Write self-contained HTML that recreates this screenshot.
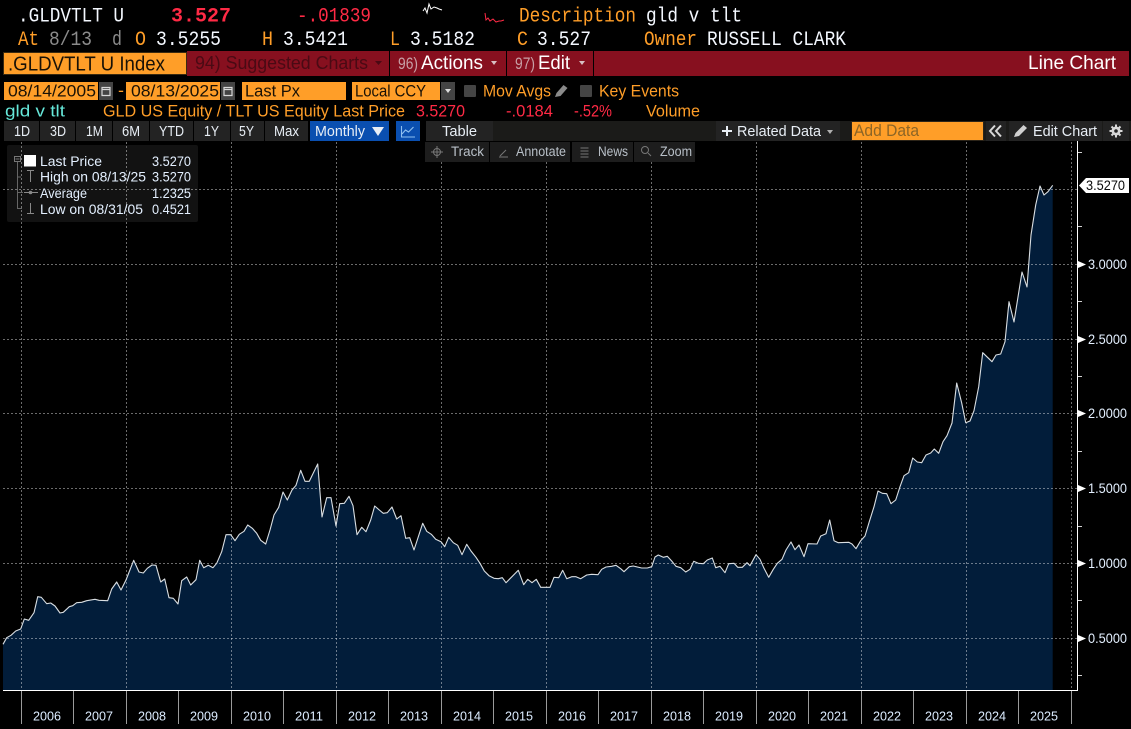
<!DOCTYPE html>
<html><head><meta charset="utf-8"><title>GLDVTLT Line Chart</title>
<style>
html,body{margin:0;padding:0;background:#000;width:1131px;height:729px;overflow:hidden}
svg{display:block}
text{font-family:"Liberation Sans",sans-serif;white-space:pre}
.m{font-family:"Liberation Mono",monospace;font-size:20px}
.o{fill:#ff9e28}.w{fill:#f4f8ff}.r{fill:#ff2a45}.g{fill:#8b8b8b}.k{fill:#1a1206}
.b{font-size:16.5px}.c{font-size:15px;fill:#e8eef5}.s{font-size:13.5px;fill:#b9c0c8}
.l{font-size:13.5px;fill:#e4f0ff}.y{font-size:13px;fill:#dcecff}.a{font-size:14px;fill:#e4f0ff}
</style></head><body>
<svg width="1131" height="729" viewBox="0 0 1131 729" xmlns="http://www.w3.org/2000/svg">
<rect width="1131" height="729" fill="#000"/>

<!-- legend background -->
<rect x="7" y="145" width="191" height="77" rx="2" fill="#121212"/>

<!-- area -->
<path id="area" fill="#021d3a" d="M3,690L3,644.3 6.7,637.7 11,635.3 15.7,631 20.7,629 24.3,619 28.7,620.3 34,612.7 37.7,596.7 41.3,597.3 46.7,603.7 50.7,603 55,606 60,613 63.3,612.3 69.3,606.7 72.7,605.7 76.7,602.7 81.7,602.3 86.7,600.7 95,599.3 99,600.3 107.7,600.7 111.7,589 116.7,582 121,590 126,580 133.7,560.3 139,572 143.3,573 147.3,568.3 152,565 156,565.3 160.7,582 164.7,579 169,597.7 173.3,598.3 178,604 181.7,580.7 186.7,577 190.7,585 196,579.7 199.7,560.3 203.7,567.7 208.3,565.3 213,567.7 216.7,563.3 221.7,551.7 226,534.7 230.7,534.7 235,540.7 239.3,534.3 244,531.3 247.7,525 252.3,528.3 256.7,533.3 260.7,540.3 265.7,544 270,530 274,515 278.7,507.3 283,492 287.3,500 292,490 296,485.3 300.7,470.3 305,481.3 309.3,481.3 317.7,464 322,517 326.7,497.7 331,497.7 336,526 339.7,503.7 344.3,503.3 349,496.3 353,505.7 357,534.7 361.7,527.3 366,531.7 370.7,520 374.7,506 379.3,510 383.3,513.3 387.3,512.7 392,507 396.7,519 401,515.7 405.7,538.3 409.7,537.7 414,550 422.7,523.3 426.7,531.3 431.3,534.3 435.7,539.3 441,541.7 444.7,546.7 448.7,537.3 453.3,542.7 457.7,545.3 462,554.7 466.7,544.3 471,551 476,557.3 480,563.3 484.3,571 489,575.7 494,578.3 498.3,578.7 502.3,577.7 506,582.7 518.3,570.3 523.7,584.7 527.7,579.3 532,582.7 536.3,579.3 540.7,587.3 550,587.3 554,577.3 558.7,577.7 562.7,570.3 566.7,578.7 571.7,576.7 576,576.7 580.7,578.7 586.7,575 591.7,574.3 598,574.7 601.7,569.3 606,567 611.7,566.3 616,565.3 620.7,568.7 624,571.7 629.3,566.7 633.3,566 641.7,568 647.3,568 651.7,566.7 655,557 658.3,555 663.3,557.3 667.3,556.3 671.7,561 676,566.3 680.7,567.7 685.7,572 690,569.3 693.7,561.3 698.3,563.3 703.3,563.7 707.3,560 712.3,558 715.7,567.7 720,566.3 725,572.7 728.7,563.7 734,563.3 737.7,567.3 742.3,567.3 747,562.7 750,565.7 756,554.7 760,559.3 764,568.3 768.7,577.3 773.3,569.3 777.3,563.3 782,559.3 786,550 791,542 795,549.7 799,545 804,556.7 808,543.7 817,544 820.7,536 826,533.7 829.7,520 834,540.7 838.3,542.7 848.7,542.3 852,544 856,548.7 860.7,540.7 865,536 869.3,521.7 874,506.7 878,491 882.3,493.3 886.7,493.7 891,503.7 895.7,500 900,486.7 904,475.7 908.7,472.7 912.7,458 917.3,462 921.7,462.7 926,455 930.7,453 934.3,449 938.7,453.3 943,441.7 947,435.7 952,423 956.7,383 961.7,403 965.7,422.7 970,421 974,410.7 978.7,386.7 982.7,352.7 992,361.7 996,355 1000.7,354 1005,341.7 1009,301.7 1014,322 1022,272 1027,287 1031,235 1035.7,205 1040,186 1044,195 1048,191.7 1052.7,185.3L1052.7,690Z"/>

<!-- grid -->
<g stroke="#fff" stroke-opacity=".42" stroke-width="1" stroke-dasharray="2 2" fill="none">
<path d="M3,189.5H1077M3,264.5H1077M3,339.5H1077M3,413.5H1077M3,488.5H1077M3,563.5H1077M3,638.5H1077"/>
<path d="M21.5,142V690M126.5,142V690M231.5,142V690M336.5,142V690M441.5,142V690M546.5,142V690M651.5,142V690M756.5,142V690M861.5,142V690M966.5,142V690M1071.5,142V690"/>
</g>

<!-- line -->
<polyline fill="none" stroke="#d9dee2" stroke-width="1.1" stroke-linejoin="round" points="3,644.3 6.7,637.7 11,635.3 15.7,631 20.7,629 24.3,619 28.7,620.3 34,612.7 37.7,596.7 41.3,597.3 46.7,603.7 50.7,603 55,606 60,613 63.3,612.3 69.3,606.7 72.7,605.7 76.7,602.7 81.7,602.3 86.7,600.7 95,599.3 99,600.3 107.7,600.7 111.7,589 116.7,582 121,590 126,580 133.7,560.3 139,572 143.3,573 147.3,568.3 152,565 156,565.3 160.7,582 164.7,579 169,597.7 173.3,598.3 178,604 181.7,580.7 186.7,577 190.7,585 196,579.7 199.7,560.3 203.7,567.7 208.3,565.3 213,567.7 216.7,563.3 221.7,551.7 226,534.7 230.7,534.7 235,540.7 239.3,534.3 244,531.3 247.7,525 252.3,528.3 256.7,533.3 260.7,540.3 265.7,544 270,530 274,515 278.7,507.3 283,492 287.3,500 292,490 296,485.3 300.7,470.3 305,481.3 309.3,481.3 317.7,464 322,517 326.7,497.7 331,497.7 336,526 339.7,503.7 344.3,503.3 349,496.3 353,505.7 357,534.7 361.7,527.3 366,531.7 370.7,520 374.7,506 379.3,510 383.3,513.3 387.3,512.7 392,507 396.7,519 401,515.7 405.7,538.3 409.7,537.7 414,550 422.7,523.3 426.7,531.3 431.3,534.3 435.7,539.3 441,541.7 444.7,546.7 448.7,537.3 453.3,542.7 457.7,545.3 462,554.7 466.7,544.3 471,551 476,557.3 480,563.3 484.3,571 489,575.7 494,578.3 498.3,578.7 502.3,577.7 506,582.7 518.3,570.3 523.7,584.7 527.7,579.3 532,582.7 536.3,579.3 540.7,587.3 550,587.3 554,577.3 558.7,577.7 562.7,570.3 566.7,578.7 571.7,576.7 576,576.7 580.7,578.7 586.7,575 591.7,574.3 598,574.7 601.7,569.3 606,567 611.7,566.3 616,565.3 620.7,568.7 624,571.7 629.3,566.7 633.3,566 641.7,568 647.3,568 651.7,566.7 655,557 658.3,555 663.3,557.3 667.3,556.3 671.7,561 676,566.3 680.7,567.7 685.7,572 690,569.3 693.7,561.3 698.3,563.3 703.3,563.7 707.3,560 712.3,558 715.7,567.7 720,566.3 725,572.7 728.7,563.7 734,563.3 737.7,567.3 742.3,567.3 747,562.7 750,565.7 756,554.7 760,559.3 764,568.3 768.7,577.3 773.3,569.3 777.3,563.3 782,559.3 786,550 791,542 795,549.7 799,545 804,556.7 808,543.7 817,544 820.7,536 826,533.7 829.7,520 834,540.7 838.3,542.7 848.7,542.3 852,544 856,548.7 860.7,540.7 865,536 869.3,521.7 874,506.7 878,491 882.3,493.3 886.7,493.7 891,503.7 895.7,500 900,486.7 904,475.7 908.7,472.7 912.7,458 917.3,462 921.7,462.7 926,455 930.7,453 934.3,449 938.7,453.3 943,441.7 947,435.7 952,423 956.7,383 961.7,403 965.7,422.7 970,421 974,410.7 978.7,386.7 982.7,352.7 992,361.7 996,355 1000.7,354 1005,341.7 1009,301.7 1014,322 1022,272 1027,287 1031,235 1035.7,205 1040,186 1044,195 1048,191.7 1052.7,185.3"/>

<!-- axes -->
<path d="M3,690.5H1078M1077.5,141V691" stroke="#fff" stroke-width="1" fill="none"/>
<path d="M1078,152.5h4M1078,226.5h4M1078,301.5h4M1078,376.5h4M1078,451.5h4M1078,526.5h4M1078,600.5h4M1078,675.5h4" stroke="#d0d0d0" stroke-width="1"/>
<path d="M21.5,691V724M73.5,691V724M126.5,691V724M178.5,691V724M231.5,691V724M283.5,691V724M336.5,691V724M388.5,691V724M441.5,691V724M493.5,691V724M546.5,691V724M598.5,691V724M651.5,691V724M703.5,691V724M756.5,691V724M808.5,691V724M861.5,691V724M913.5,691V724M966.5,691V724M1018.5,691V724M1071.5,691V724" stroke="#9a9a9a" stroke-width="1"/>
<path fill="#fff" d="M1078,261l8,3.5-8,3.5zM1078,336l8,3.5-8,3.5zM1078,410l8,3.5-8,3.5zM1078,485l8,3.5-8,3.5zM1078,560l8,3.5-8,3.5zM1078,635l8,3.5-8,3.5z"/>

<!-- year labels -->
<g class="y">
<text class="y" x="33" y="720.5" textLength="28" lengthAdjust="spacingAndGlyphs">2006</text>
<text class="y" x="85" y="720.5" textLength="28" lengthAdjust="spacingAndGlyphs">2007</text>
<text class="y" x="138" y="720.5" textLength="28" lengthAdjust="spacingAndGlyphs">2008</text>
<text class="y" x="190" y="720.5" textLength="28" lengthAdjust="spacingAndGlyphs">2009</text>
<text class="y" x="243" y="720.5" textLength="28" lengthAdjust="spacingAndGlyphs">2010</text>
<text class="y" x="295" y="720.5" textLength="28" lengthAdjust="spacingAndGlyphs">2011</text>
<text class="y" x="348" y="720.5" textLength="28" lengthAdjust="spacingAndGlyphs">2012</text>
<text class="y" x="400" y="720.5" textLength="28" lengthAdjust="spacingAndGlyphs">2013</text>
<text class="y" x="453" y="720.5" textLength="28" lengthAdjust="spacingAndGlyphs">2014</text>
<text class="y" x="505" y="720.5" textLength="28" lengthAdjust="spacingAndGlyphs">2015</text>
<text class="y" x="558" y="720.5" textLength="28" lengthAdjust="spacingAndGlyphs">2016</text>
<text class="y" x="610" y="720.5" textLength="28" lengthAdjust="spacingAndGlyphs">2017</text>
<text class="y" x="663" y="720.5" textLength="28" lengthAdjust="spacingAndGlyphs">2018</text>
<text class="y" x="715" y="720.5" textLength="28" lengthAdjust="spacingAndGlyphs">2019</text>
<text class="y" x="768" y="720.5" textLength="28" lengthAdjust="spacingAndGlyphs">2020</text>
<text class="y" x="820" y="720.5" textLength="28" lengthAdjust="spacingAndGlyphs">2021</text>
<text class="y" x="873" y="720.5" textLength="28" lengthAdjust="spacingAndGlyphs">2022</text>
<text class="y" x="925" y="720.5" textLength="28" lengthAdjust="spacingAndGlyphs">2023</text>
<text class="y" x="978" y="720.5" textLength="28" lengthAdjust="spacingAndGlyphs">2024</text>
<text class="y" x="1030" y="720.5" textLength="28" lengthAdjust="spacingAndGlyphs">2025</text>
</g>

<!-- axis labels -->
<text class="a" x="1088" y="269" textLength="39" lengthAdjust="spacingAndGlyphs">3.0000</text>
<text class="a" x="1088" y="344" textLength="39" lengthAdjust="spacingAndGlyphs">2.5000</text>
<text class="a" x="1088" y="418" textLength="39" lengthAdjust="spacingAndGlyphs">2.0000</text>
<text class="a" x="1088" y="493" textLength="39" lengthAdjust="spacingAndGlyphs">1.5000</text>
<text class="a" x="1088" y="568" textLength="39" lengthAdjust="spacingAndGlyphs">1.0000</text>
<text class="a" x="1088" y="643" textLength="39" lengthAdjust="spacingAndGlyphs">0.5000</text>
<path fill="#fff" d="M1079,185.5l7,-7.5h43v15h-43z"/>
<text x="1086" y="190" font-size="14" fill="#0a0a0a" textLength="39" lengthAdjust="spacingAndGlyphs">3.5270</text>

<!-- header rows -->
<text class="m w" x="18" y="21.5" textLength="106" lengthAdjust="spacingAndGlyphs">.GLDVTLT U</text>
<text class="m r" x="171" y="21.5" font-weight="bold" textLength="60" lengthAdjust="spacingAndGlyphs">3.527</text>
<text class="m r" x="297" y="21.5" textLength="74" lengthAdjust="spacingAndGlyphs">-.01839</text>
<polyline fill="none" stroke="#fff" stroke-width="1" points="423,11 425,8 427,13 429,4 431,9 434,7 437,8 439,9 442,10"/>
<polyline fill="none" stroke="#ff2a45" stroke-width="1" points="485,13 486,20 488,18 490,21 493,19 496,22 499,21 501,21 504,20"/>
<text class="m o" x="519" y="21.5" textLength="117" lengthAdjust="spacingAndGlyphs">Description</text>
<text class="m w" x="646" y="21.5" textLength="96" lengthAdjust="spacingAndGlyphs">gld v tlt</text>

<text class="m o" x="18" y="45" textLength="21" lengthAdjust="spacingAndGlyphs">At</text>
<text class="m g" x="49" y="45" textLength="43" lengthAdjust="spacingAndGlyphs">8/13</text>
<text class="m g" x="112" y="45" textLength="10" lengthAdjust="spacingAndGlyphs">d</text>
<text class="m o" x="135" y="45" textLength="11" lengthAdjust="spacingAndGlyphs">O</text>
<text class="m w" x="156" y="45" textLength="65" lengthAdjust="spacingAndGlyphs">3.5255</text>
<text class="m o" x="262" y="45" textLength="11" lengthAdjust="spacingAndGlyphs">H</text>
<text class="m w" x="283" y="45" textLength="65" lengthAdjust="spacingAndGlyphs">3.5421</text>
<text class="m o" x="390" y="45" textLength="10" lengthAdjust="spacingAndGlyphs">L</text>
<text class="m w" x="410" y="45" textLength="65" lengthAdjust="spacingAndGlyphs">3.5182</text>
<text class="m o" x="517" y="45" textLength="11" lengthAdjust="spacingAndGlyphs">C</text>
<text class="m w" x="537" y="45" textLength="54" lengthAdjust="spacingAndGlyphs">3.527</text>
<text class="m o" x="644" y="45" textLength="53" lengthAdjust="spacingAndGlyphs">Owner</text>
<text class="m w" x="707" y="45" textLength="139" lengthAdjust="spacingAndGlyphs">RUSSELL CLARK</text>

<!-- red bar -->
<rect x="187" y="51" width="942" height="25" fill="#87101f"/>
<rect x="3" y="52" width="184" height="23" fill="#3a2a10"/>
<rect x="4" y="53" width="182" height="21" fill="#ff9e28"/>
<text x="8" y="70.5" font-size="20" class="k" textLength="157" lengthAdjust="spacingAndGlyphs">.GLDVTLT U Index</text>
<text x="195" y="69" font-size="18.5" fill="#4a0a14" textLength="173" lengthAdjust="spacingAndGlyphs">94) Suggested Charts</text>
<path fill="#4a0a14" d="M375,61h7l-3.5,4z"/>
<path d="M389.5,51V76M506.5,51V76M593.5,51V76" stroke="#000" stroke-width="1"/>
<text x="398" y="69" font-size="17" fill="#c7a0a6" textLength="20" lengthAdjust="spacingAndGlyphs">96)</text>
<text x="421" y="69" font-size="19.5" fill="#fff" textLength="62" lengthAdjust="spacingAndGlyphs">Actions</text>
<path fill="#d8c0c4" d="M491,61h6l-3,4z"/>
<text x="515" y="69" font-size="17" fill="#c7a0a6" textLength="20" lengthAdjust="spacingAndGlyphs">97)</text>
<text x="538" y="69" font-size="19.5" fill="#fff" textLength="32" lengthAdjust="spacingAndGlyphs">Edit</text>
<path fill="#d8c0c4" d="M579,61h6l-3,4z"/>
<text x="1028" y="69" font-size="19.5" fill="#fff" textLength="88" lengthAdjust="spacingAndGlyphs">Line Chart</text>

<!-- date row -->
<rect x="4" y="82" width="94" height="18" fill="#ff9e28"/>
<text class="b k" x="8" y="96.5" textLength="88" lengthAdjust="spacingAndGlyphs">08/14/2005</text>
<rect x="99" y="82" width="14" height="18" fill="#444"/>
<path d="M102,87.5h8v8h-8zM102,89.5h8" fill="none" stroke="#d8d8d8" stroke-width="1.2"/>
<text class="b" fill="#ff9e28" x="118" y="96" textLength="6" lengthAdjust="spacingAndGlyphs">-</text>
<rect x="126" y="82" width="94" height="18" fill="#ff9e28"/>
<text class="b k" x="131" y="96.5" textLength="88" lengthAdjust="spacingAndGlyphs">08/13/2025</text>
<rect x="221" y="82" width="14" height="18" fill="#444"/>
<path d="M224,87.5h8v8h-8zM224,89.5h8" fill="none" stroke="#d8d8d8" stroke-width="1.2"/>
<rect x="242" y="82" width="104" height="18" fill="#ff9e28"/>
<text class="b k" x="245" y="96.5" textLength="55" lengthAdjust="spacingAndGlyphs">Last Px</text>
<rect x="352" y="82" width="88" height="18" fill="#ff9e28"/>
<text class="b k" x="355" y="96.5" textLength="71" lengthAdjust="spacingAndGlyphs">Local CCY</text>
<rect x="441" y="82" width="14" height="18" fill="#444"/>
<path fill="#ddd" d="M445,89h6l-3,4z"/>
<rect x="464" y="85" width="12" height="12" rx="1" fill="#444"/>
<text class="b o" x="483" y="96.5" textLength="68" lengthAdjust="spacingAndGlyphs">Mov Avgs</text>
<path fill="#8a8a8a" d="M555,97l1.5,-4 7,-8 4,3 -7,8z"/>
<rect x="580" y="85" width="12" height="12" rx="1" fill="#444"/>
<text class="b o" x="599" y="96.5" textLength="80" lengthAdjust="spacingAndGlyphs">Key Events</text>

<!-- description row -->
<text class="b" fill="#66e8da" x="5" y="116.5" textLength="60" lengthAdjust="spacingAndGlyphs">gld v tlt</text>
<text class="b o" x="103" y="116.5" textLength="302" lengthAdjust="spacingAndGlyphs">GLD US Equity / TLT US Equity Last Price</text>
<text class="b r" x="416" y="116.5" textLength="49" lengthAdjust="spacingAndGlyphs">3.5270</text>
<text class="b r" x="506" y="116.5" textLength="47" lengthAdjust="spacingAndGlyphs">-.0184</text>
<text class="b r" x="574" y="116.5" textLength="38" lengthAdjust="spacingAndGlyphs">-.52%</text>
<text class="b o" x="646" y="116.5" textLength="54" lengthAdjust="spacingAndGlyphs">Volume</text>

<!-- toolbar -->
<rect x="493" y="121" width="638" height="20" fill="#1b1b19"/>
<g fill="#232323">
<rect x="4" y="121" width="35" height="20"/><rect x="40" y="121" width="35" height="20"/><rect x="76" y="121" width="36" height="20"/><rect x="113" y="121" width="36" height="20"/><rect x="150" y="121" width="43" height="20"/><rect x="194" y="121" width="36" height="20"/><rect x="231" y="121" width="33" height="20"/><rect x="265" y="121" width="43" height="20"/><rect x="426" y="121" width="67" height="20"/><rect x="716" y="121" width="124" height="20"/><rect x="986" y="121" width="20" height="20"/><rect x="1009" y="121" width="93" height="20"/><rect x="1103" y="121" width="26" height="20"/>
</g>
<rect x="310" y="121" width="79" height="20" fill="#0a4fb0"/>
<rect x="396" y="121" width="24" height="20" fill="#0a4fb0"/>
<text class="c" x="14" y="136" textLength="16" lengthAdjust="spacingAndGlyphs">1D</text>
<text class="c" x="50" y="136" textLength="16" lengthAdjust="spacingAndGlyphs">3D</text>
<text class="c" x="86" y="136" textLength="17" lengthAdjust="spacingAndGlyphs">1M</text>
<text class="c" x="122" y="136" textLength="18" lengthAdjust="spacingAndGlyphs">6M</text>
<text class="c" x="159" y="136" textLength="25" lengthAdjust="spacingAndGlyphs">YTD</text>
<text class="c" x="204" y="136" textLength="15" lengthAdjust="spacingAndGlyphs">1Y</text>
<text class="c" x="239" y="136" textLength="15" lengthAdjust="spacingAndGlyphs">5Y</text>
<text class="c" x="274" y="136" textLength="25" lengthAdjust="spacingAndGlyphs">Max</text>
<text class="c" x="315" y="136" textLength="50" lengthAdjust="spacingAndGlyphs">Monthly</text>
<path fill="#e8eef5" d="M372,127h12l-6,9z"/>
<path d="M401.5,126V137H415M402,134l3.5,-4 3,2 5,-5" fill="none" stroke="#8fc0f0" stroke-width="1.1"/>
<text class="c" x="442" y="136" textLength="35" lengthAdjust="spacingAndGlyphs">Table</text>
<path d="M722,131h10M727,126v10" stroke="#e8eef5" stroke-width="2"/>
<text class="c" x="737" y="136" textLength="84" lengthAdjust="spacingAndGlyphs">Related Data</text>
<path fill="#b0b0b0" d="M827,130h6l-3,4z"/>
<rect x="851" y="121" width="133" height="20" fill="#2c2418"/>
<rect x="852" y="122" width="131" height="18" fill="#ff9e28"/>
<text x="854" y="136" font-size="16.5" fill="#8c6526" textLength="65" lengthAdjust="spacingAndGlyphs">Add Data</text>
<path d="M995,125.5l-5,5.5 5,5.5M1001,125.5l-5,5.5 5,5.5" fill="none" stroke="#d8d8d8" stroke-width="2"/>
<path fill="#d0d0d0" d="M1014,137l1.5,-4 8,-8 3.5,3 -8,8z"/>
<text class="c" x="1033" y="136" textLength="64" lengthAdjust="spacingAndGlyphs">Edit Chart</text>
<path d="M1116,124.5v13M1109.5,131h13M1111.5,126.5l9,9M1120.5,126.5l-9,9" stroke="#d8d8d8" stroke-width="2"/>
<circle cx="1116" cy="131" r="4.5" fill="#d8d8d8"/>
<circle cx="1116" cy="131" r="1.8" fill="#232323"/>

<!-- chart tools -->
<g fill="#1d1d1d">
<rect x="425" y="142" width="64" height="20"/><rect x="490" y="142" width="80" height="20"/><rect x="572" y="142" width="61" height="20"/><rect x="634" y="142" width="61" height="20"/>
</g>
<g stroke="#777" fill="none" stroke-width="1">
<circle cx="437" cy="152" r="3.5"/><path d="M437,146v12M431,152h12"/>
<path d="M500,156l6,-6M499,157h9"/>
<path d="M580.5,148h8M580.5,151h8M580.5,154h8M580.5,157h8"/>
<circle cx="645" cy="150" r="3.5"/><path d="M648,153l3,3"/>
</g>
<text class="s" x="451" y="156" textLength="33" lengthAdjust="spacingAndGlyphs">Track</text>
<text class="s" x="516" y="156" textLength="50" lengthAdjust="spacingAndGlyphs">Annotate</text>
<text class="s" x="598" y="156" textLength="30" lengthAdjust="spacingAndGlyphs">News</text>
<text class="s" x="660" y="156" textLength="32" lengthAdjust="spacingAndGlyphs">Zoom</text>

<!-- legend -->
<rect x="24" y="155" width="12" height="11.5" fill="#fff"/>
<path d="M14.5,156.5h6v5h-6zM15.5,159h4" fill="none" stroke="#777" stroke-width="1"/>
<path d="M17.5,162V208.5H22M17.5,177H21M17.5,192.5H23" fill="none" stroke="#666" stroke-width="1"/>
<path d="M27,170.5h7M30.5,170.5V182M27,213.5h7M30.5,203V213.5M24,192.5h14" fill="none" stroke="#888" stroke-width="1"/>
<circle cx="30.5" cy="192.5" r="1.8" fill="#888"/>
<text class="l" x="40" y="166" textLength="62" lengthAdjust="spacingAndGlyphs">Last Price</text>
<text class="l" x="152" y="166" textLength="39" lengthAdjust="spacingAndGlyphs">3.5270</text>
<text class="l" x="40" y="181.5" textLength="106" lengthAdjust="spacingAndGlyphs">High on 08/13/25</text>
<text class="l" x="152" y="181.5" textLength="39" lengthAdjust="spacingAndGlyphs">3.5270</text>
<text class="l" x="40" y="198" textLength="47" lengthAdjust="spacingAndGlyphs">Average</text>
<text class="l" x="152" y="198" textLength="39" lengthAdjust="spacingAndGlyphs">1.2325</text>
<text class="l" x="40" y="214" textLength="103" lengthAdjust="spacingAndGlyphs">Low on 08/31/05</text>
<text class="l" x="152" y="214" textLength="39" lengthAdjust="spacingAndGlyphs">0.4521</text>
</svg>
</body></html>
